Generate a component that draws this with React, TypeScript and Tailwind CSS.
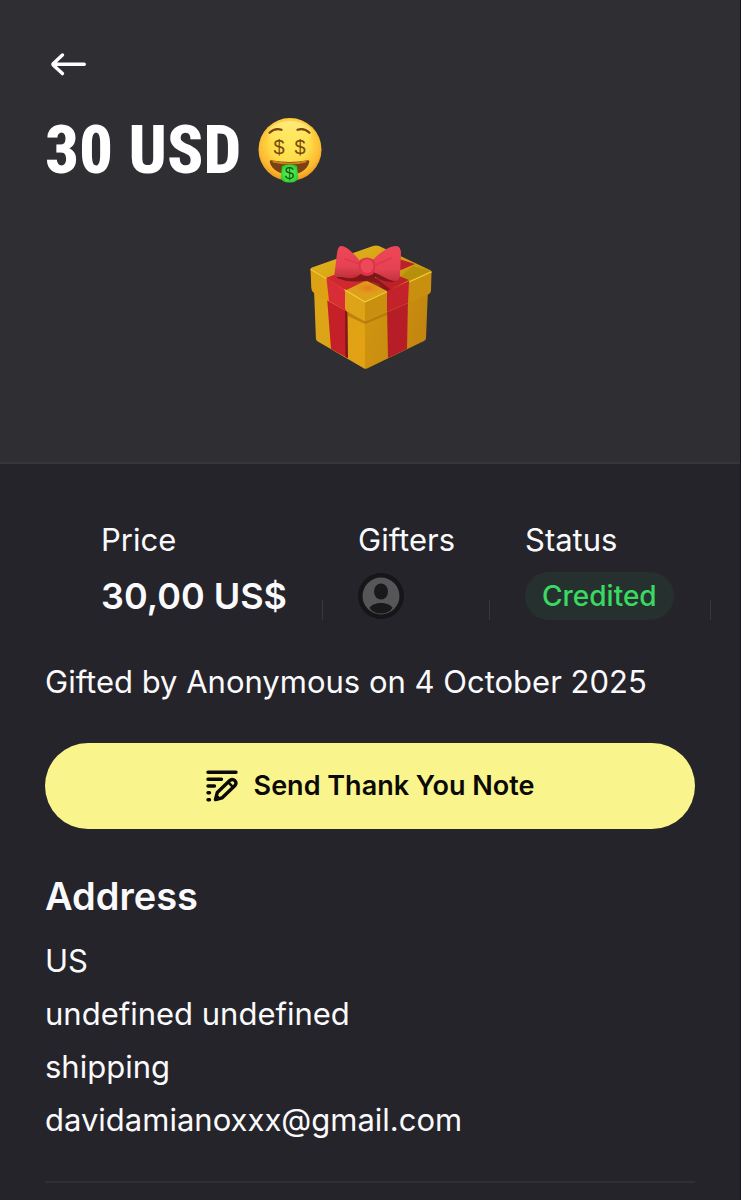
import type { ReactNode } from "react";

function BackArrow() {
  return (
    <svg viewBox="0 0 36 24" className="h-6 w-9" fill="none" stroke="#fff" strokeWidth="3.4" strokeLinecap="round" strokeLinejoin="round" aria-hidden="true">
      <path d="M33.3 12.300H2.200M11.400 3L2.400 11.400Q1.600 12.300 2.400 13.200L11.400 21.600" />
    </svg>
  );
}

function MoneyFace() {
  return (
    <svg viewBox="0 0 66 66" className="size-[66px]" aria-hidden="true">
      <defs>
        <radialGradient id="face" cx="0.5" cy="0.4" r="0.62">
          <stop offset="0" stopColor="#ffe858" />
          <stop offset="0.5" stopColor="#ffdc48" />
          <stop offset="0.8" stopColor="#fcb931" />
          <stop offset="1" stopColor="#ea8f16" />
        </radialGradient>
        <linearGradient id="shine" x1="0" y1="0" x2="0" y2="1">
          <stop offset="0" stopColor="#fff6a8" stopOpacity="0.6" />
          <stop offset="1" stopColor="#fff06a" stopOpacity="0" />
        </linearGradient>
        <radialGradient id="tongue" cx="0.5" cy="0.5" r="0.65">
          <stop offset="0" stopColor="#5df25b" />
          <stop offset="0.6" stopColor="#3ddf40" />
          <stop offset="1" stopColor="#16b52a" />
        </radialGradient>
      </defs>
      <circle cx="33" cy="32.500" r="31.500" fill="url(#face)" />
      <ellipse cx="33" cy="17" rx="22" ry="13" fill="url(#shine)" />
      <g fill="none" stroke="#754410" strokeWidth="2.200" strokeLinecap="round">
        <path d="M12.500 15.800Q18 10.500 24.500 12.800" />
        <path d="M40.500 12.800Q47 10.500 52.500 15.800" />
      </g>
      <path d="M14 43.200Q33 46.800 51 43.200Q52.700 43.100 52.300 45C50 53.200 43 57.500 33 57.500S15 53.200 12.700 45Q12.300 43.100 14 43.200Z" fill="#7a4210" />
      <path d="M15 43.600Q33 47.800 50 43.600L49 45.600Q33 49.500 16 45.600Z" fill="#c98222" />
      <path d="M25 49Q32.500 46.200 40 49L41.200 59.500Q41.500 65.500 32.500 65.500T23.800 59.500Z" fill="url(#tongue)" />
      <g fontFamily="Liberation Sans" fontWeight="400" textAnchor="middle">
        <text x="22" y="36.500" fontSize="20" fill="#754a10">$</text>
        <text x="43" y="36.500" fontSize="20" fill="#754a10">$</text>
        <text x="32.500" y="62" fontSize="17" fill="#1d5a14">$</text>
      </g>
    </svg>
  );
}

function GiftBox() {
  return (
    <svg viewBox="0 0 150 150" className="size-[150px]" role="img" aria-label="Gift">
      <defs>
        <linearGradient id="left" x1="0" y1="0" x2="1" y2="0">
          <stop offset="0" stopColor="#dba417" />
          <stop offset="1" stopColor="#e2a214" />
        </linearGradient>
        <linearGradient id="right" x1="0" y1="0" x2="1" y2="0.3">
          <stop offset="0" stopColor="#d0960f" />
          <stop offset="1" stopColor="#c38710" />
        </linearGradient>
        <linearGradient id="lid" x1="0" y1="0" x2="1" y2="1">
          <stop offset="0" stopColor="#e9b81c" />
          <stop offset="1" stopColor="#bc850e" />
        </linearGradient>
        <radialGradient id="glow">
          <stop offset="0" stopColor="#e8781d" />
          <stop offset="1" stopColor="#e8901d" stopOpacity="0" />
        </radialGradient>
        <linearGradient id="bow" x1="0" y1="0" x2="0" y2="1">
          <stop offset="0" stopColor="#ee4658" />
          <stop offset="0.65" stopColor="#e64252" />
          <stop offset="1" stopColor="#c2323e" />
        </linearGradient>
      </defs>
      <path d="M19 58L70 80V138L22 110Q21 109 20.900 107Z" fill="url(#left)" />
      <path d="M70 80L133 58L131 107Q131 109 129 110L72 137.500Q71 138 70 137.500Z" fill="url(#right)" />
      <path d="M32 66L50 74L52.500 127L36 118Z" fill="#c51f29" />
      <path d="M50 78L52.500 80L53 127L50.500 126Z" fill="#7e1917" />
      <path d="M92 76L113 68L112 118L93 127Z" fill="#b71d26" />
      <path d="M53 80L70 90L92 81V84L70 93L53 85Z" fill="#a86c0c" opacity="0.600" />
      <path d="M16 38Q15.500 37 17 36.500L78 15Q81 14 84 15L135 39Q137 40 136.500 42L70 71Z" fill="url(#lid)" />
      <path d="M106 45L118 35L135 40L114 50Z" fill="#b5910b" />
      <path d="M31 47L56 37L80 45L50 60Z" fill="#d02731" />
      <path d="M104 28L120 33L106 39L100 36Z" fill="#be202a" />
      <path d="M76 51L92 40L114 49L93 60Z" fill="#be202a" />
      <path d="M66 49L77 44L96 59L93 61L72 51Z" fill="#871719" />
      <path d="M49 60L72 50L92 60L70 71Z" fill="#dda01a" />
      <ellipse cx="73" cy="57" rx="15" ry="7" fill="url(#glow)" />
      <path d="M15.500 38L70 71V90Q69 90 67 89L19 62Q16.500 60.500 16.300 57Z" fill="#dda114" />
      <path d="M70 71L136.500 41L136 59Q136 62 133 63.500L73 89.500Q71 90.500 70 90Z" fill="#c9900f" />
      <path d="M31.500 47.500L50 59L51 80L34 70Z" fill="#d82d37" />
      <path d="M92 60L114 50L113 72L92 81Z" fill="#c3212b" />
      <path d="M16 38.500L31 47.500M50 59L69 70.500Q70 71 71 70.500L91.500 61M115 50.500L136 41" fill="none" stroke="#f3ce35" strokeWidth="1.300" strokeLinecap="round" />
      <path d="M50 78V61L70 72V90Z" fill="#dfa318" />
      <path d="M42 44Q57 51 66 43L80 39L103 49Q95 54 80 46L68 50Q54 52 42 47Z" fill="#7e1719" />
      <path d="M65 30C60 24 53 16 47 15C42 14 42 23 41 31L39.500 42Q39.500 46 44 46C52 46.500 60 45 67 42Z" fill="url(#bow)" />
      <path d="M78 29C85 21 95 15 101 15Q106 15 106 23L105 43Q105 49 101 50C96 51 86 44 78 41Z" fill="url(#bow)" />
      <path d="M50 28L65 33M81 34L96 27" stroke="#dc394b" strokeWidth="1.500" fill="none" strokeLinecap="round" />
      <path d="M65 29Q72 24 79 29Q82 36 78 43Q72 47 66 43Q62 36 65 29Z" fill="#d93447" />
      <ellipse cx="72" cy="35" rx="6.500" ry="7" fill="#ec4857" />
    </svg>
  );
}

function Avatar() {
  return (
    <svg viewBox="0 0 46 46" className="size-[46px]" role="img" aria-label="Anonymous">
      <circle cx="23" cy="23" r="23" fill="#161519" />
      <circle cx="23" cy="23" r="18.500" fill="#565558" />
      <ellipse cx="23" cy="18.500" rx="7" ry="8" fill="#19181b" />
      <path d="M11.500 34.800C13.500 31.500 18 30 23 30S32.500 31.500 34.500 34.800C32.500 38.500 28 40.600 23 40.600S13.500 38.500 11.500 34.800Z" fill="#19181b" />
    </svg>
  );
}

function NoteIcon() {
  return (
    <svg viewBox="0 0 32 32" className="size-8" fill="none" stroke="#0b0a06" strokeWidth="3.400" strokeLinecap="round" strokeLinejoin="round" aria-hidden="true">
      <path d="M2 2.300H30M2 9.200H15.500M2 16H8.500M2 22.800H3.500M2 29.700H3.500" />
      <path d="M9.500 29.500L11.300 22.500L24 10.300Q26.500 8.500 28.800 10.500Q31 13 29 15.500L16.200 27.800Z" />
      <path d="M22.500 12.500L26.800 16.800" strokeWidth="2.500" />
      <path d="M9 30L10.500 24.500L14.500 28.500Z" fill="#0b0a06" strokeWidth="1" />
    </svg>
  );
}

function Stat({ label, children }: { label: string; children: ReactNode }) {
  return (
    <div className="flex items-end justify-between">
      <dl className="pl-[35px]">
        <dt className="text-[31px] leading-10 whitespace-nowrap">{label}</dt>
        <dd className="mt-3 flex h-12 items-center whitespace-nowrap">{children}</dd>
      </dl>
      <span className="h-5 w-px bg-[#38373d]" />
    </div>
  );
}

const address = ["US", "undefined undefined", "shipping", "davidamianoxxx@gmail.com"];

export default function App() {
  return (
    <div className="min-h-screen border-r border-[#17161a] bg-[#25242a] font-['Inter',sans-serif] text-[#fafafc]">
      <header className="border-b-2 border-[#37363b] bg-[#2f2e33] px-[45px] pt-[52px] pb-[81px]">
        <button type="button" aria-label="Back" className="ml-1.5 block">
          <BackArrow />
        </button>
        <h1 className="mt-[34px] flex h-20 items-center gap-4 font-['Roboto_Condensed','Liberation_Sans_Narrow',sans-serif] text-[67px] leading-20 font-extrabold text-white">
          30 USD
          <MoneyFace />
        </h1>
        <div className="mt-[41px] flex justify-center">
          <GiftBox />
        </div>
      </header>

      <main>
        <section className="mr-[29px] ml-[66px] grid grid-cols-[257fr_167fr_221fr] pt-14">
          <Stat label="Price">
            <span className="text-[36px] font-semibold">30,00 US$</span>
          </Stat>
          <Stat label="Gifters">
            <Avatar />
          </Stat>
          <Stat label="Status">
            <span className="flex h-12 items-center rounded-full bg-[#26312f] px-[17px] text-[28px] font-medium text-[#39d962]">Credited</span>
          </Stat>
        </section>

        <div className="px-[45px]">
          <p className="mt-10 text-[31px] leading-11">Gifted by Anonymous on 4 October 2025</p>

          <button type="button" className="mt-[39px] flex h-[86px] w-full items-center justify-center gap-4 rounded-full bg-[#f9f58c] text-[27px] font-semibold text-[#0b0a06]">
            <NoteIcon />
            Send Thank You Note
          </button>

          <section className="mt-[41px] border-b-2 border-[#302f35] pb-[35px]">
            <h2 className="text-[38px] leading-[52px] font-semibold">Address</h2>
            <address className="mt-3 text-[31px] leading-[53px] not-italic">
              {address.map((line) => (
                <div key={line}>{line}</div>
              ))}
            </address>
          </section>
        </div>
      </main>
    </div>
  );
}
